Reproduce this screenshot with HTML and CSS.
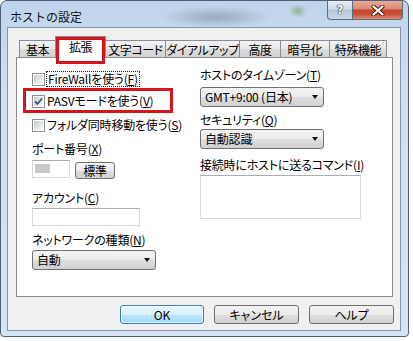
FILE: index.html
```html
<!DOCTYPE html>
<html lang="ja">
<head>
    <meta charset="UTF-8">
    <title>ホストの設定</title>
    <link rel="stylesheet" href="styles.css">
</head>
<body>
    <div class="window">
        <div class="titlebar">
            <span class="title">ホストの設定</span>
            <div class="caption-btns">
                <span class="cap help">?</span>
                <span class="cap close">
                    <svg width="14" height="11" viewBox="0 0 14 11">
                        <path d="M2.5 1.5 L11.5 9.5 M11.5 1.5 L2.5 9.5" stroke="#4a1a10" stroke-width="4" stroke-linecap="round"/>
                        <path d="M2.5 1.5 L11.5 9.5 M11.5 1.5 L2.5 9.5" stroke="#fff" stroke-width="2.2" stroke-linecap="round"/>
                    </svg>
                </span>
            </div>
        </div>

        <div class="client">
            <div class="tabs">
                <span class="tab w-kihon">基本</span>
                <span class="tab active marked w-kakucho">拡張</span>
                <span class="tab w-moji">文字コード</span>
                <span class="tab w-dial">ダイアルアップ</span>
                <span class="tab w-kodo">高度</span>
                <span class="tab w-angou">暗号化</span>
                <span class="tab w-tokushu">特殊機能</span>
            </div>

            <div class="panel">
                <div class="col">
                    <div class="check row-1">
                        <span class="box"></span>
                        <span class="focus">FireWallを使う(<u>F</u>)</span>
                    </div>
                    <div class="check row-2 marked-row">
                        <span class="box">
                            <svg width="11" height="11" viewBox="0 0 11 11">
                                <path d="M2 5.5 L4.5 8 L9 2.5" fill="none" stroke="#3d5283" stroke-width="1.8"/>
                            </svg>
                        </span>
                        <span>PASVモードを使う(<u>V</u>)</span>
                    </div>
                    <div class="check row-3">
                        <span class="box"></span>
                        <span>フォルダ同時移動を使う(<u>S</u>)</span>
                    </div>

                    <div class="label gap-port">ポート番号(<u>X</u>)</div>
                    <div class="port-row">
                        <span class="field port"><span class="sel"></span></span>
                        <span class="btn std">標準</span>
                    </div>

                    <div class="label gap-account">アカウント(<u>C</u>)</div>
                    <div class="field account"></div>

                    <div class="label gap-net">ネットワークの種類(<u>N</u>)</div>
                    <div class="combo">自動<span class="arrow"></span></div>
                </div>

                <div class="col">
                    <div class="label gap-tz">ホストのタイムゾーン(<u>T</u>)</div>
                    <div class="combo tz">GMT+9:00 (日本)<span class="arrow"></span></div>

                    <div class="label gap-sec">セキュリティ(<u>Q</u>)</div>
                    <div class="combo sec">自動認識<span class="arrow"></span></div>

                    <div class="label gap-cmd">接続時にホストに送るコマンド(<u>I</u>)</div>
                    <div class="field command"></div>
                </div>
            </div>

            <div class="buttons">
                <span class="btn dlg default">OK</span>
                <span class="btn dlg">キャンセル</span>
                <span class="btn dlg">ヘルプ</span>
            </div>
        </div>
    </div>
</body>
</html>
```

FILE: styles.css
```css
body {
    margin: 0;
    background: #fff;
    font-family: "Noto Sans CJK JP", sans-serif;
    font-size: 12px;
    color: #000;
}
u {
    text-decoration-thickness: 1px;
    text-underline-offset: 1px;
}

/* window frame */
.window {
    width: 409px;
    height: 337px;
    box-sizing: border-box;
    border: 1px solid #4f5f76;
    border-radius: 7px 7px 4px 4px;
    padding: 0 7px 5px 6px;
    display: flex;
    flex-direction: column;
    background:
        radial-gradient(55px 11px at 215px 16px, rgba(105,115,135,.45), rgba(105,115,135,0)),
        radial-gradient(9px 7px at 297px 10px, rgba(110,150,70,.55), rgba(110,150,70,0)),
        linear-gradient(#bfd4eb, #cddff1 25%, #d5e4f4);
}
.titlebar {
    height: 26px;
    display: flex;
    justify-content: space-between;
    align-items: flex-start;
}
.title {
    margin: 7px 0 0 3px;
    line-height: 18px;
    font-size: 12px;
    color: #111;
}
.caption-btns {
    display: flex;
    margin-right: -2px;
}
.cap {
    height: 19px;
    box-sizing: border-box;
    border: 1px solid #5b6b82;
    border-top: none;
    display: flex;
    align-items: center;
    justify-content: center;
}
.help {
    width: 25px;
    border-radius: 0 0 0 4px;
    border-right: none;
    background: linear-gradient(#e8eef5, #d0dbe8 45%, #b6c6d9 50%, #c8d6e6);
    font-family: "DejaVu Sans", sans-serif;
    font-size: 12px;
    font-weight: bold;
    color: #fff;
    text-shadow: 0 0 1px #1d2838, 0 0 1px #1d2838, 0 0 1px #1d2838;
}
.close {
    width: 51px;
    border-radius: 0 0 4px 0;
    background: linear-gradient(#e9ab9a, #db8974 45%, #c4442c 50%, #c9533a 75%, #df8e77);
}

/* client area */
.client {
    flex: 1;
    border: 1px solid #8396b0;
    background: #f0f0f0;
    padding: 8px 6px 0 8px;
    display: flex;
    flex-direction: column;
}
.tabs {
    height: 21px;
    margin-left: 3px;
    display: flex;
    align-items: flex-end;
}
.tab {
    height: 17px;
    box-sizing: border-box;
    border: 1px solid #898c95;
    border-bottom: none;
    margin-left: -1px;
    background: linear-gradient(#f4f4f4, #e8e8e8 50%, #dcdcdc 51%, #d3d3d3);
    display: flex;
    align-items: center;
    justify-content: center;
    line-height: 15px;
    white-space: nowrap;
    letter-spacing: -0.4px;
    font-feature-settings: "palt";
}
.tab:first-child {
    margin-left: 0;
}
.tab.active {
    position: relative;
    z-index: 2;
    height: 22px;
    margin-bottom: -1px;
    padding-bottom: 3px;
    background: #fff;
}
.marked::after {
    content: "";
    position: absolute;
    left: 0;
    top: 0;
    width: 100%;
    height: 27px;
    box-sizing: border-box;
    border: 3px solid #d2161c;
}
.w-kihon { width: 37px; }
.w-kakucho { width: 51px; }
.w-moji { width: 61px; }
.w-dial { width: 75px; }
.w-kodo { width: 42px; }
.w-angou { width: 50px; }
.w-tokushu { width: 58px; }

.panel {
    width: 377px;
    height: 240px;
    box-sizing: border-box;
    border: 1px solid #898c95;
    background: #fff;
    padding-left: 15px;
    display: grid;
    grid-template-columns: 168px 1fr;
    align-items: start;
    font-feature-settings: "palt";
    letter-spacing: -0.2px;
}
.col {
    display: flex;
    flex-direction: column;
    align-items: flex-start;
}

/* checkboxes */
.check {
    height: 16px;
    display: flex;
    align-items: center;
    gap: 2px;
    line-height: 14px;
}
.box {
    width: 13px;
    height: 13px;
    box-sizing: border-box;
    border: 1px solid #8e8f8f;
    padding: 1px;
    background:
        linear-gradient(135deg, #c6cad0, #eceef0 70%, #f8f8f8) content-box,
        linear-gradient(#fff, #fff) padding-box;
    display: flex;
    align-items: center;
    justify-content: center;
}
.box svg {
    margin: -1px;
}
.focus {
    outline: 1px dotted #222;
    outline-offset: 0;
    padding: 0 1px;
}
.row-1 { margin-top: 13px; }
.row-2 { margin-top: 6px; }
.row-3 { margin-top: 8px; }
.marked-row {
    position: relative;
}
.marked-row::after {
    content: "";
    position: absolute;
    left: -9px;
    top: -5px;
    width: 150px;
    height: 25px;
    box-sizing: border-box;
    border: 3px solid #d2161c;
}

/* labels and fields */
.label {
    line-height: 16px;
    height: 16px;
    white-space: nowrap;
}
.gap-port { margin-top: 8px; }
.gap-account { margin-top: 11px; }
.gap-net { margin-top: 6px; }
.gap-tz { margin-top: 9px; }
.gap-sec { margin-top: 5px; }
.gap-cmd { margin-top: 8px; }

.field {
    box-sizing: border-box;
    border: 1px solid #d6d9df;
    border-top-color: #abadb3;
    background: #fff;
}
.port-row {
    margin-top: 3px;
    display: flex;
    align-items: flex-start;
    gap: 5px;
}
.port {
    width: 38px;
    height: 18px;
    padding: 3px 0 0 2px;
}
.sel {
    display: block;
    width: 15px;
    height: 9px;
    background: #c9c9c9;
}
.account {
    width: 108px;
    height: 18px;
    margin-top: 2px;
}
.command {
    width: 161px;
    height: 44px;
    margin-top: 2px;
}

.combo {
    width: 124px;
    height: 20px;
    margin-top: 2px;
    box-sizing: border-box;
    border: 1px solid #707070;
    border-radius: 3px;
    padding: 0 5px 0 4px;
    background: linear-gradient(#f3f3f3, #ececec 50%, #dedede 51%, #d1d1d1);
    display: flex;
    align-items: center;
    justify-content: space-between;
    line-height: 16px;
}
.combo.tz { margin-top: 4px; }
.combo.sec { margin-top: 1px; }
.arrow {
    width: 0;
    height: 0;
    border-left: 3.5px solid transparent;
    border-right: 3.5px solid transparent;
    border-top: 4px solid #111;
}

/* buttons */
.btn {
    box-sizing: border-box;
    border: 1px solid #707070;
    border-radius: 3px;
    background: linear-gradient(#f3f3f3, #ececec 50%, #dedede 51%, #d1d1d1);
    display: flex;
    align-items: center;
    justify-content: center;
    line-height: 14px;
    font-feature-settings: "palt";
}
.std {
    width: 40px;
    height: 17px;
    margin-top: 2px;
}
.buttons {
    margin-top: 8px;
    display: flex;
    justify-content: flex-end;
    gap: 10px;
}
.dlg {
    width: 85px;
    height: 19px;
}
.default {
    width: 84px;
    border-color: #3c7fb1;
    background: linear-gradient(#eaf6fd, #d9f0fc 50%, #bee6fd 51%, #a7d9f5);
    box-shadow: inset 0 0 0 1px rgba(255,255,255,.6);
}
```
